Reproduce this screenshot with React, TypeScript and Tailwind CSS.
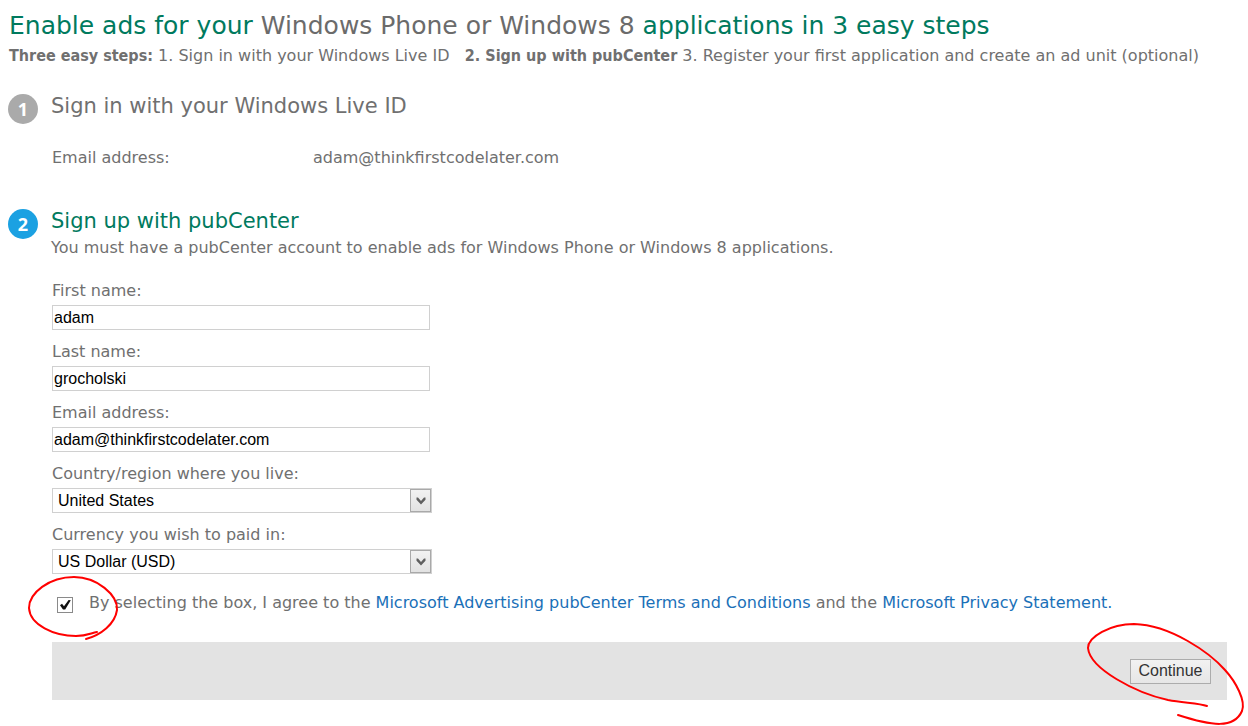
import { useState } from "react";
import type { ReactNode } from "react";

function StepBadge({ n, active }: { n: number; active?: boolean }) {
  return (
    <span
      aria-hidden="true"
      className={`mt-[3px] flex size-[30px] shrink-0 items-center justify-center rounded-full font-['Open_Sans',sans-serif] text-lg font-bold text-white ${
        active ? "bg-[#1ba1e2]" : "bg-[#aaaaaa]"
      }`}
    >
      {n}
    </span>
  );
}

function Field({ id, label, children }: { id: string; label: string; children: ReactNode }) {
  return (
    <div className="flex flex-col">
      <label htmlFor={id} className="h-[26px] leading-6">
        {label}
      </label>
      {children}
    </div>
  );
}

function TextField({ id, label, value }: { id: string; label: string; value: string }) {
  const [text, setText] = useState(value);
  return (
    <Field id={id} label={label}>
      <input
        id={id}
        type="text"
        value={text}
        onChange={(e) => setText(e.target.value)}
        className="h-[25px] w-[378px] border border-[#d0d0d0] bg-white px-px font-['Liberation_Sans',Arial,sans-serif] text-base text-black outline-none"
      />
    </Field>
  );
}

function SelectField({ id, label, options }: { id: string; label: string; options: string[] }) {
  return (
    <Field id={id} label={label}>
      <div className="relative w-[380px]">
        <select
          id={id}
          className="block h-[25px] w-full appearance-none border border-[#d0d0d0] bg-white pr-6 pl-[5px] font-['Liberation_Sans',Arial,sans-serif] text-base leading-5 text-black outline-none"
        >
          {options.map((o) => (
            <option key={o}>{o}</option>
          ))}
        </select>
        <span className="pointer-events-none absolute inset-y-px right-px flex w-[21px] items-center justify-center border border-[#a9a9a9] bg-linear-to-b from-[#f2f2f2] to-[#e2e2e2]">
          <svg viewBox="0 0 10 8" className="h-2 w-[10px]" aria-hidden="true">
            <path d="M0.5 0.5 L2 0.5 L5 4 L8 0.5 L9.5 0.5 L9.5 2.8 L5 7.6 L0.5 2.8 Z" fill="#606060" />
          </svg>
        </span>
      </div>
    </Field>
  );
}

export default function App() {
  const [agreed, setAgreed] = useState(true);
  return (
    <main className="overflow-x-hidden bg-white pt-[10px] pr-[21px] pb-[26px] pl-2 font-['Verdana','DejaVu_Sans',sans-serif] text-base text-[#707070]">
      <h1 className="pl-px text-[25px] leading-8 text-[#007a5e]">
        Enable ads for your <span className="text-[#6b6b6b]">Windows Phone or Windows 8</span> applications in 3 easy
        steps
      </h1>
      <p className="pl-px leading-7">
        <b className="font-['DejaVu_Sans_Condensed','DejaVu_Sans',sans-serif]">Three easy steps:</b> 1. Sign in with
        your Windows Live ID &nbsp;{" "}
        <b className="font-['DejaVu_Sans_Condensed','DejaVu_Sans',sans-serif]">2. Sign up with pubCenter</b> 3. Register
        your first application and create an ad unit (optional)
      </p>

      <section className="mt-[21px] flex gap-[13px]">
        <StepBadge n={1} />
        <div>
          <h2 className="text-[21px] leading-[30px]">Sign in with your Windows Live ID</h2>
          <dl className="mt-[25px] flex pl-px leading-6">
            <dt className="w-[261px]">Email address:</dt>
            <dd>adam@thinkfirstcodelater.com</dd>
          </dl>
        </div>
      </section>

      <section className="mt-9 flex gap-[13px]">
        <StepBadge n={2} active />
        <div className="grow">
          <h2 className="text-[21px] leading-[30px] text-[#007a5e]">Sign up with pubCenter</h2>
          <p className="leading-6">
            You must have a pubCenter account to enable ads for Windows Phone or Windows 8 applications.
          </p>

          <form className="mt-[19px] pl-px" onSubmit={(e) => e.preventDefault()}>
            <div className="flex flex-col gap-[10px]">
              <TextField id="first-name" label="First name:" value="adam" />
              <TextField id="last-name" label="Last name:" value="grocholski" />
              <TextField id="email" label="Email address:" value="adam@thinkfirstcodelater.com" />
              <SelectField id="country" label="Country/region where you live:" options={["United States"]} />
              <SelectField id="currency" label="Currency you wish to paid in:" options={["US Dollar (USD)"]} />
            </div>

            <div className="mt-[17px] flex gap-4 pl-[5px] leading-6">
              <span className="relative mt-[6px] size-4 shrink-0">
                <input
                  id="agree"
                  type="checkbox"
                  checked={agreed}
                  onChange={(e) => setAgreed(e.target.checked)}
                  className="block size-4 appearance-none border border-[#8a8a8a] bg-white"
                />
                {agreed && (
                  <svg viewBox="0 0 16 16" className="pointer-events-none absolute inset-0 size-4" aria-hidden="true">
                    <path d="M3 8.2 L5 6.8 L7 9.2 L11.6 3 L13.8 3.2 L8.2 12.4 L6 12.4 Z" fill="#111" />
                  </svg>
                )}
                <svg
                  viewBox="0 0 92 68"
                  className="pointer-events-none absolute -top-[22px] -left-[30px] h-[68px] w-[92px] max-w-none"
                  fill="none"
                  stroke="#f00"
                  strokeWidth="2"
                  strokeLinecap="round"
                  aria-hidden="true"
                >
                  <path d="M70 57 C64 58 60 61 49 61 C27 61 3 50 2 33 C2 18 22 2 47 2 C70 2 91 20 90 35 C88 49 74 60 59 64" />
                </svg>
              </span>
              <p>
                <label htmlFor="agree">By selecting the box, I agree to the </label>
                <a href="#terms" className="text-[#1a70b8]">
                  Microsoft Advertising pubCenter Terms and Conditions
                </a>{" "}
                and the{" "}
                <a href="#privacy" className="text-[#1a70b8]">
                  Microsoft Privacy Statement.
                </a>
              </p>
            </div>

            <div className="mt-[27px] flex h-[58px] items-center justify-end bg-[#e3e3e3] pr-4">
              <div className="relative">
                <button
                  type="submit"
                  className="block h-[25px] w-[81px] border border-[#acacac] bg-linear-to-b from-[#f2f2f2] to-[#e6e6e6] font-['Liberation_Sans',Arial,sans-serif] text-base leading-5 text-[#333]"
                >
                  Continue
                </button>
                <svg
                  viewBox="0 0 160 104"
                  className="pointer-events-none absolute -top-9 -left-11 h-[104px] w-[160px] max-w-none"
                  fill="none"
                  stroke="#f00"
                  strokeWidth="2"
                  strokeLinecap="round"
                  aria-hidden="true"
                >
                  <path d="M121 83 C113 80 98 80 82 77 C50 70 4 46 2 25 C2 14 24 1 48 1 C85 2 124 30 139 47 C150 59 160 78 156 88 C148 106 126 103 92 92" />
                </svg>
              </div>
            </div>
          </form>
        </div>
      </section>
    </main>
  );
}
